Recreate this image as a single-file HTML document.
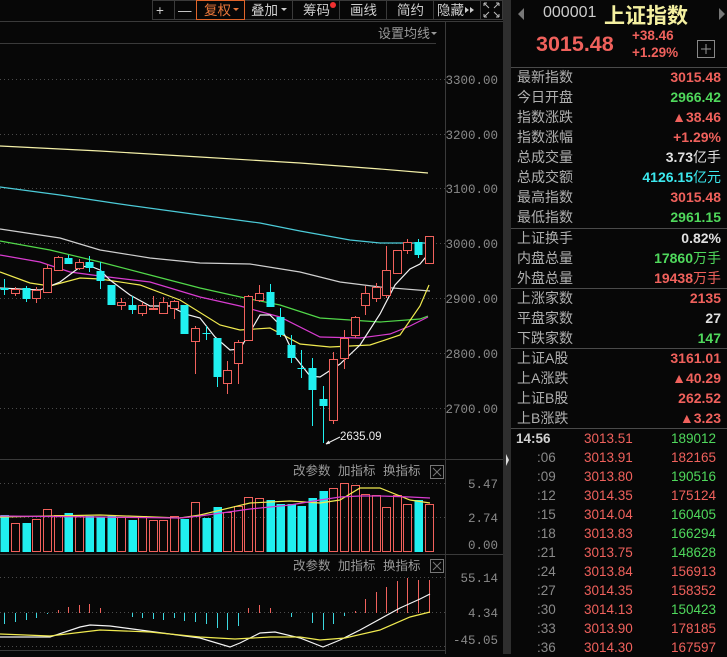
<!DOCTYPE html>
<html><head><meta charset="utf-8"><style>
*{margin:0;padding:0;box-sizing:border-box}
body{width:727px;height:654px;background:#070707;overflow:hidden;position:relative;font-family:"Liberation Sans","Noto Sans CJK SC",sans-serif;color:#b8b8b8}
.a{position:absolute;white-space:nowrap}
.r{color:#f0615c}.g{color:#4fd95c}.c{color:#3ce8ee}.w{color:#e0e0e0}
.lab{position:absolute;left:517px;font-size:14px;color:#b0b0b0;line-height:20px}
.val{position:absolute;right:6px;font-size:14px;line-height:20px;font-weight:bold}
.tk{position:absolute;font-size:13.5px;line-height:19px}
</style></head><body>
<svg class="a" style="left:0;top:0" width="511" height="654" xmlns="http://www.w3.org/2000/svg" font-family="Liberation Sans, Noto Sans CJK SC, sans-serif">
<g stroke="#3a3a3a" fill="none">
<rect x="152.5" y="0.5" width="350" height="19"/>
<line x1="174.5" y1="0" x2="174.5" y2="20"/><line x1="196.5" y1="0" x2="196.5" y2="20"/>
<line x1="292.5" y1="0" x2="292.5" y2="20"/><line x1="339.5" y1="0" x2="339.5" y2="20"/>
<line x1="386.5" y1="0" x2="386.5" y2="20"/><line x1="433.5" y1="0" x2="433.5" y2="20"/><line x1="480.5" y1="0" x2="480.5" y2="20"/>
<line x1="0" y1="21.5" x2="503" y2="21.5"/>
<line x1="0" y1="43.5" x2="436" y2="43.5"/>
<line x1="445.5" y1="21" x2="445.5" y2="654"/>
<line x1="0" y1="459.5" x2="503" y2="459.5"/>
<line x1="0" y1="554.5" x2="503" y2="554.5"/>
<line x1="0" y1="650.5" x2="445" y2="650.5"/>
</g>
<rect x="196.5" y="0.5" width="48" height="19" fill="none" stroke="#e0652a"/>
<g font-size="13.5" fill="#cfcfcf">
<text x="156" y="15">+</text><text x="178" y="15">—</text>
<text x="204" y="15" fill="#e8763a">复权</text><path d="M233 8h6l-3 3z" fill="#e8763a"/>
<text x="251" y="15">叠加</text><path d="M281 8h6l-3 3z" fill="#ccc"/>
<text x="303" y="15">筹码</text><circle cx="333" cy="5" r="3" fill="#f03030"/>
<text x="350" y="15">画线</text><text x="397" y="15">简约</text>
<text x="437" y="15">隐藏</text><path d="M465 7l4 3-4 3zM470 7l4 3-4 3z" fill="#ccc"/>
</g>
<g stroke="#bbb" fill="none" stroke-width="1"><path d="M484 3l5 5M484 3h3M484 3v3M499 3l-5 5M499 3h-3M499 3v3M484 17l5-5M484 17h3M484 17v-3M499 17l-5-5M499 17h-3M499 17v-3"/></g>
<text x="378" y="38" font-size="13" fill="#9a9a9a">设置均线</text><path d="M431 32h6l-3 3z" fill="#999"/>
<g stroke="#4a4a4a" stroke-dasharray="1,3"><line x1="0" y1="79.5" x2="445" y2="79.5"/><line x1="0" y1="134.5" x2="445" y2="134.5"/><line x1="0" y1="188.5" x2="445" y2="188.5"/><line x1="0" y1="243.5" x2="445" y2="243.5"/><line x1="0" y1="298.5" x2="445" y2="298.5"/><line x1="0" y1="353.5" x2="445" y2="353.5"/><line x1="0" y1="408.5" x2="445" y2="408.5"/>
<line x1="0" y1="483.5" x2="445" y2="483.5"/><line x1="0" y1="517.5" x2="445" y2="517.5"/>
<line x1="0" y1="577.5" x2="445" y2="577.5"/><line x1="0" y1="612.5" x2="445" y2="612.5"/><line x1="0" y1="646.5" x2="445" y2="646.5"/></g>
<g font-family="Liberation Mono, monospace" font-size="12.5" fill="#8a8a8a" text-anchor="end">
<text x="498" y="84">3300.00</text><text x="498" y="139">3200.00</text><text x="498" y="193">3100.00</text><text x="498" y="248">3000.00</text><text x="498" y="303">2900.00</text><text x="498" y="358">2800.00</text><text x="498" y="413">2700.00</text>
<text x="498" y="488">5.47</text><text x="498" y="522">2.74</text><text x="498" y="549">0.00</text>
<text x="498" y="582">55.14</text><text x="498" y="617">4.34</text><text x="498" y="644">-45.05</text>
</g>
<g fill="none" stroke-width="1.2">
<polyline stroke="#f4f0a8" points="0,146 100,151 200,157 300,163 380,169 428,173"/>
<polyline stroke="#4ccbd8" points="0,187 60,195 120,204 200,215 260,223 300,231 350,240 380,243 428,243"/>
<polyline stroke="#cfcfcf" points="0,229 60,238 100,250 150,258 200,263 250,264 300,272 340,282 380,287 430,291"/>
<polyline stroke="#52d84a" points="0,241 50,250 100,262 150,275 200,288 245,298 280,305 320,318 380,322 420,319 428,316"/>
<polyline stroke="#d83cd0" points="0,255 40,262 70,272 100,276 150,282 200,297 240,306 280,317 320,337 360,338 390,334 410,326 428,317"/>
<polyline stroke="#f0ea50" points="0,272 30,283 50,286 80,278 100,279 140,285 180,300 220,325 240,330 270,328 300,344 330,347 370,345 400,335 420,306 429,285"/>
<polyline stroke="#f4f4f4" points="0,288 20,289 40,290 60,282 80,267 90,266 100,270 110,280 130,295 150,306 170,306 185,314 200,318 215,337 230,350 240,349 260,315 270,315 280,325 295,357 310,376 320,377 340,364 360,345 380,314 395,285 410,269 420,264 430,252"/>
</g>
<g id="cs"></g>
<g id="vs"></g>
<g id="ms"></g>
<g fill="none" stroke-width="1.2">
<polyline stroke="#f0ea50" points="0,517 100,515 180,518 200,515 250,503 290,501 320,503 340,500 360,488 380,488 410,500 430,503"/>
<polyline stroke="#d83cd0" points="0,516 100,517 180,518 200,516 250,509 290,505 320,500 340,497 360,496 380,496 410,497 430,498"/>
<polyline stroke="#f4f4f4" points="0,637 50,637 80,627 90,625 110,626 140,630 200,638 230,647 240,643 260,633 275,632 300,638 323,647 340,640 360,630 400,608 420,599 430,594"/>
<polyline stroke="#f0ea50" points="0,634 50,636 100,630 150,632 200,637 235,639 270,637 300,637 320,640 345,638 380,630 410,617 430,612"/>
</g>
<path d="M326 444L340 437M326 444l4-1M326 444l3-3" stroke="#eee" fill="none"/>
<text x="340" y="440" font-size="11.5" fill="#eee">2635.09</text>
<g font-size="12.5" fill="#9a9a9a">
<text x="293" y="475">改参数</text><text x="338" y="475">加指标</text><text x="383" y="475">换指标</text>
<text x="293" y="570">改参数</text><text x="338" y="570">加指标</text><text x="383" y="570">换指标</text></g>
<g stroke="#777" fill="none"><rect x="430.5" y="465.5" width="13" height="13"/><path d="M433 468l8 8M441 468l-8 8"/>
<rect x="430.5" y="559.5" width="13" height="13"/><path d="M433 562l8 8M441 562l-8 8"/></g>
<rect x="503" y="0" width="8" height="654" fill="#2e2e2e"/>
<path d="M506 454l3 6-3 6z" fill="#ddd"/>
</svg>
<div class="a" style="left:511px;top:0;width:216px;height:654px;">
<svg class="a" style="left:0;top:0" width="216" height="654"><path d="M13 8v12l-6-6z M208 8v12l6-6z" fill="#777"/>
<rect x="186.5" y="40.5" width="17" height="17" fill="none" stroke="#888"/><path d="M195 44v10M190 49h10" stroke="#999"/>
<g stroke="#4a4a4a"><line x1="0" y1="67.5" x2="216" y2="67.5"/><line x1="0" y1="228.5" x2="216" y2="228.5"/><line x1="0" y1="288.5" x2="216" y2="288.5"/><line x1="0" y1="348.5" x2="216" y2="348.5"/><line x1="0" y1="428.5" x2="216" y2="428.5"/></g></svg>
<div class="a" style="left:32px;top:4px;font-size:16px;color:#ccc">000001</div>
<div class="a" style="left:93px;top:0px;font-size:21px;font-weight:bold;color:#f4f0a0">上证指数</div>
<div class="a r" style="left:25px;top:32px;font-size:21.5px;font-weight:bold">3015.48</div>
<div class="a r" style="left:121px;top:28px;font-size:13.5px;font-weight:bold">+38.46</div>
<div class="a r" style="left:121px;top:45px;font-size:13.5px;font-weight:bold">+1.29%</div>
</div>
<div class="lab" style="top:67px">最新指数<br>今日开盘<br>指数涨跌<br>指数涨幅<br>总成交量<br>总成交额<br>最高指数<br>最低指数</div>
<div class="val r" style="top:67px">3015.48</div>
<div class="val g" style="top:87px">2966.42</div>
<div class="val r" style="top:107px">▲38.46</div>
<div class="val r" style="top:127px">+1.29%</div>
<div class="val w" style="top:147px">3.73<span style="font-weight:normal">亿手</span></div>
<div class="val c" style="top:167px">4126.15<span style="font-weight:normal">亿元</span></div>
<div class="val r" style="top:187px">3015.48</div>
<div class="val g" style="top:207px">2961.15</div>
<div class="lab" style="top:228px">上证换手<br>内盘总量<br>外盘总量</div>
<div class="val w" style="top:228px">0.82%</div>
<div class="val g" style="top:248px">17860<span style="font-weight:normal">万手</span></div>
<div class="val r" style="top:268px">19438<span style="font-weight:normal">万手</span></div>
<div class="lab" style="top:288px">上涨家数<br>平盘家数<br>下跌家数</div>
<div class="val r" style="top:288px">2135</div>
<div class="val w" style="top:308px">27</div>
<div class="val g" style="top:328px">147</div>
<div class="lab" style="top:348px">上证A股<br>上A涨跌<br>上证B股<br>上B涨跌</div>
<div class="val r" style="top:348px">3161.01</div>
<div class="val r" style="top:368px">▲40.29</div>
<div class="val r" style="top:388px">262.52</div>
<div class="val r" style="top:408px">▲3.23</div>
<div id="ticks"></div>
<script>
var C=[[4,288,290,279,295,0],[15,289,293,287,296,1],[26,288,299,286,302,0],[36,290,298,287,303,1],[47,268,292,264,292,1],[58,257,270,256,271,1],[68,258,264,255,264,0],[79,262,268,259,270,1],[89,262,268,256,272,0],[100,271,281,262,289,0],[111,285,305,285,305,0],[121,302,305,298,310,1],[132,305,310,296,314,0],[142,305,313,302,316,1],[153,308,309,296,310,1],[163,302,313,297,314,1],[174,301,308,300,319,1],[184,305,334,305,334,0],[195,328,341,326,374,1],[206,333,334,326,340,0],[217,338,377,338,387,0],[227,370,383,361,394,1],[238,342,363,340,384,1],[248,296,340,295,340,1],[259,293,300,285,302,1],[270,292,307,284,307,0],[280,317,335,308,337,0],[291,345,358,335,363,0],[301,368,369,350,378,0],[312,368,390,358,426,0],[323,399,406,386,443,0],[333,359,420,352,424,1],[344,338,358,330,369,1],[355,317,335,316,338,1],[365,293,305,286,315,1],[376,287,298,283,302,1],[386,270,295,246,298,1],[397,250,273,250,273,1],[407,242,250,239,254,1],[418,242,255,239,258,0],[429,236,263,236,263,1]];
var V=[515,523,523,519,509,515,513,516,516,517,516,517,520,516,520,520,516,519,502,518,507,512,506,497,498,500,504,504,506,498,491,488,483,485,494,495,507,495,504,500,504];
var M=[624,622,620,618,614,610,607,605,604,608,613,613,617,618,619,620,618,621,622,624,628,630,626,608,605,608,613,617,613,623,630,624,616,611,599,592,587,581,578,580,580];
var R='#f0615c',Q='#20f0f0',s='',v='',m='';
C.forEach(function(c,i){var col=c[5]?R:Q,x=c[0];
s+='<line x1="'+(x+.5)+'" y1="'+c[3]+'" x2="'+(x+.5)+'" y2="'+c[4]+'" stroke="'+col+'"/>';
var h=Math.max(1,c[2]-c[1]);
if(c[5])s+='<rect x="'+(x-3.5)+'" y="'+(c[1]+.5)+'" width="8" height="'+h+'" fill="#070707" stroke="'+col+'"/>';
else s+='<rect x="'+(x-3.5)+'" y="'+c[1]+'" width="8" height="'+h+'" fill="'+col+'"/>';
var t=V[i];
if(c[5])v+='<rect x="'+(x-3.5)+'" y="'+(t+.5)+'" width="8" height="'+(551-t)+'" fill="none" stroke="'+col+'"/>';
else v+='<rect x="'+(x-3.5)+'" y="'+t+'" width="8.5" height="'+(552-t)+'" fill="'+col+'"/>';
var y=M[i],z=613;m+='<line x1="'+(x+.5)+'" y1="'+z+'" x2="'+(x+.5)+'" y2="'+y+'" stroke="'+(y<z?R:'#3cd8e0')+'"/>';});
document.getElementById('cs').innerHTML=s;document.getElementById('vs').innerHTML=v;document.getElementById('ms').innerHTML=m;
var T=[['14:56','3013.51','189012',0],[':06','3013.91','182165',1],[':09','3013.80','190516',0],[':12','3014.35','175124',1],[':15','3014.04','160405',0],[':18','3013.83','166294',0],[':21','3013.75','148628',0],[':24','3013.84','156913',1],[':27','3014.35','158352',1],[':30','3014.13','150423',0],[':33','3013.90','178185',1],[':36','3014.30','167597',1]];
var h='';T.forEach(function(t,i){var y=429+i*19;
h+='<div class="tk" style="top:'+y+'px;left:'+(i?537:516)+'px;color:'+(i?'#8a8a8a':'#d0d0d0')+';font-weight:'+(i?'normal':'bold')+'">'+t[0]+'</div>';
h+='<div class="tk r" style="top:'+y+'px;left:584px">'+t[1]+'</div>';
h+='<div class="tk" style="top:'+y+'px;right:11px;color:'+(t[3]?'#f0615c':'#4fd95c')+'">'+t[2]+'</div>';});
document.getElementById('ticks').innerHTML=h;
</script>
</body></html>
